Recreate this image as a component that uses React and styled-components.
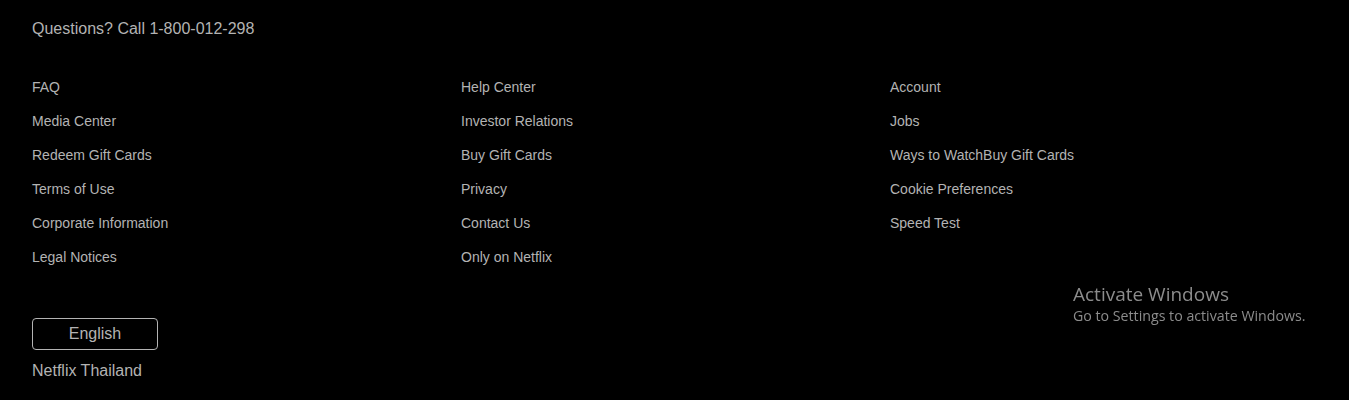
import React from 'react';
import styled, { createGlobalStyle } from 'styled-components';

const GlobalStyle = createGlobalStyle`
  html, body {
    margin: 0;
    padding: 0;
    background: #000;
  }
  body {
    font-family: "Liberation Sans", Arial, sans-serif;
  }
`;

const Footer = styled.footer`
  width: 1349px;
  height: 400px;
  box-sizing: border-box;
  padding: 20px 30px 0 32px;
  background: #000;
  color: #b3b3b3;
`;

const Questions = styled.div`
  font-size: 16px;
  line-height: 18px;
  margin-bottom: 41px;
`;

const LinkGrid = styled.ul`
  list-style: none;
  margin: 0;
  padding: 0;
  display: grid;
  grid-template-columns: repeat(3, 429px);
  grid-template-rows: repeat(6, 34px);
  grid-auto-flow: column;
`;

const LinkItem = styled.li`
  font-size: 14px;
  line-height: 16px;
  color: #b3b3b3;
`;

const LangButton = styled.button`
  display: block;
  margin-top: 35px;
  width: 126px;
  height: 32px;
  box-sizing: border-box;
  border: 1px solid #b3b3b3;
  border-radius: 4px;
  background: transparent;
  color: #b3b3b3;
  font-family: "Liberation Sans", Arial, sans-serif;
  font-size: 16px;
  padding: 0;
`;

const Country = styled.div`
  margin-top: 12px;
  font-size: 16px;
  line-height: 18px;
`;

const Watermark = styled.div`
  position: fixed;
  left: 1073px;
  top: 283px;
  font-family: "Open Sans", "Noto Sans", sans-serif;
  color: #8c8c8c;
  pointer-events: none;
`;

const WatermarkTitle = styled.div`
  font-size: 19px;
  line-height: 22px;
`;

const WatermarkText = styled.div`
  font-size: 14.2px;
  line-height: 21px;
`;

const columns = [
  ['FAQ', 'Media Center', 'Redeem Gift Cards', 'Terms of Use', 'Corporate Information', 'Legal Notices'],
  ['Help Center', 'Investor Relations', 'Buy Gift Cards', 'Privacy', 'Contact Us', 'Only on Netflix'],
  ['Account', 'Jobs', 'Ways to WatchBuy Gift Cards', 'Cookie Preferences', 'Speed Test'],
];

export default function App() {
  return (
    <>
      <GlobalStyle />
      <Footer>
        <Questions>Questions? Call 1-800-012-298</Questions>
        <LinkGrid>
          {columns.map((col, ci) =>
            Array.from({ length: 6 }).map((_, ri) => (
              <LinkItem key={ci + '-' + ri}>{col[ri] || ''}</LinkItem>
            ))
          )}
        </LinkGrid>
        <LangButton>English</LangButton>
        <Country>Netflix Thailand</Country>
      </Footer>
      <Watermark>
        <WatermarkTitle>Activate Windows</WatermarkTitle>
        <WatermarkText>Go to Settings to activate Windows.</WatermarkText>
      </Watermark>
    </>
  );
}
